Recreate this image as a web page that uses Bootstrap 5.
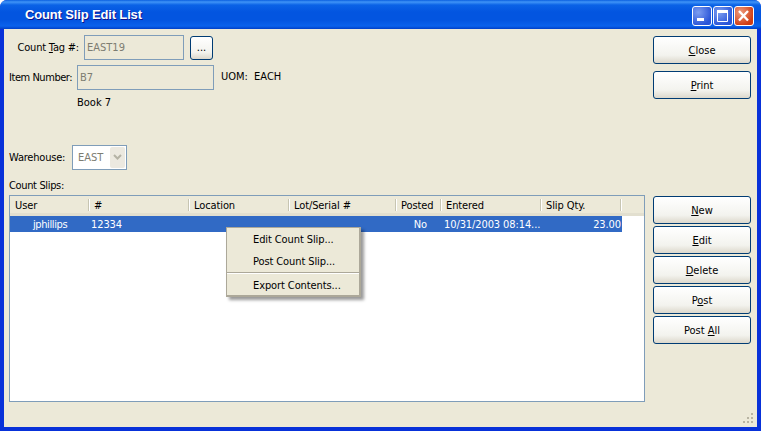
<!DOCTYPE html>
<html><head><meta charset="utf-8"><title>Count Slip Edit List</title>
<link href="https://cdn.jsdelivr.net/npm/bootstrap@5.3.0/dist/css/bootstrap.min.css" rel="stylesheet">
<style>
html,body{height:431px;overflow:hidden;background:#fff}
body{font:11px/13px "DejaVu Sans Condensed","Liberation Sans",Arial,sans-serif;color:#000;letter-spacing:-.1px}
u{text-decoration-thickness:1px;text-underline-offset:1px}
.win{width:761px;height:431px;background:#0831d9;border-radius:7px 7px 0 0;overflow:hidden}
.tbar{height:29px;padding:0 7px 0 25px;background:linear-gradient(#0a5fe0 0,#3f94f7 2px,#0a62e6 5px,#0355e0 12px,#0355e0 20px,#0a62ec 26px,#0040c8 29px)}
.ttl{font:700 13px/15px "Liberation Sans",Arial,sans-serif;color:#fff;text-shadow:1px 1px #0f1089;letter-spacing:-.15px}
.wbtn{width:20px;height:20px;border:1px solid #fff;border-radius:3px;background:radial-gradient(circle at 30% 30%,#7d9ef0,#2a55d8 75%)}
.wbtn svg{display:block}
.wbtn.cl{background:radial-gradient(circle at 30% 30%,#ee9c7e,#d03c12 75%)}
.ctl{gap:1px;margin-top:2px}
.wbody{height:398px;margin:0 4px;background:#ece9d8;position:relative;padding:6px 6px 0 5px}
.leftp{width:636px}
.rightp{width:98px;margin-left:8px;padding-top:1px}
.xpb{display:block;width:98px;height:28px;padding:0;border:1px solid #003c74;border-radius:3px;background:linear-gradient(#fff,#f3f3ee 70%,#dcd8cc);font-size:11px;color:#000;text-align:center}
.xpb.sm{width:23px;height:24px;line-height:14px;margin:1px 0 0 6px}
.gap7{margin-top:7px}.gap2{margin-top:2px}.btop{margin-top:97px}
.fld{height:25px;border:1px solid #7f9db9;background:#ece9d8;color:#7d7d72;padding-left:2px;line-height:23px;letter-spacing:0}
.r1{height:25px;margin-bottom:5px}
.lbl1{width:70px;text-align:right;margin-right:5px;line-height:25px;white-space:nowrap;letter-spacing:-.2px}
.w100{width:100px}.w137{width:137px}
.lbl2{width:63px;line-height:25px;margin-right:5px;white-space:nowrap;letter-spacing:-.45px}
.uom{margin-left:7px;line-height:23px;word-spacing:3px;letter-spacing:0}
.bk{margin:6px 0 0 68px;height:13px;letter-spacing:0}
.wh{margin-top:36px;height:25px}
.lblw{width:58px;line-height:25px;margin-right:5px;letter-spacing:-.2px}
.cmb{width:55px;height:25px;border:1px solid #7f9db9;background:#fff;color:#7d7d72;padding:1px 1px 1px 5px;line-height:21px;letter-spacing:0}
.arr{width:15px;height:21px;margin-left:auto;background:#ece9e0;border-radius:2px}
.arr svg{display:block;margin:7px auto 0}
.cs{margin-top:9px;height:14px;line-height:13px;letter-spacing:-.35px}
.lst{margin-top:2px;width:636px;height:207px;border:1px solid #7f9db9;background:#fff;position:relative}
.ghd,.grw{display:grid;grid-template-columns:79px 100px 100px 107px 45px 100px 80px 1fr}
.ghd{height:20px;background:#ece9d8;border-bottom:3px solid #e2dfcf;line-height:19px}
.ghd>div{padding-left:5px;position:relative;white-space:nowrap}
.ghd>div:not(:last-child)::after{content:"";position:absolute;right:0;top:3px;height:12px;width:1px;background:#c7c5b2;box-shadow:1px 0 #fff}
.grw{width:612px;height:16px;background:#316ac5;color:#fff;line-height:18px}
.grw>div{padding-left:2px;white-space:nowrap}
.grw .i1{padding-left:23px;letter-spacing:-.4px}.grw .ctr{padding:0 14px 0 16px;text-align:right}.grw .d{padding-left:3px}.grw .q{padding:0;text-align:right}
.cmenu{position:absolute;left:216px;top:31px;width:135px;height:70px;background:#ece9d8;border:1px solid #aca899;border-width:1px 2px 2px 1px;box-shadow:3px 3px 3px rgba(0,0,0,.4)}
.mi{height:22px;line-height:23px;padding-left:26px}
.msep{height:2px;background:#aca899;border-bottom:1px solid #fff}
.grip{position:absolute;right:3px;bottom:2px;display:block}
</style></head>
<body>
<div class="win">
 <div class="tbar d-flex align-items-center justify-content-between">
  <div class="ttl">Count Slip Edit List</div>
  <div class="ctl d-flex">
   <div class="wbtn"><svg width="18" height="18"><rect x="4" y="11" width="7" height="3" fill="#fff"/></svg></div>
   <div class="wbtn"><svg width="18" height="18"><path d="M3.500 4.500h10v10h-10z" fill="none" stroke="#fff"/><rect x="3" y="3" width="11" height="3" fill="#fff"/></svg></div>
   <div class="wbtn cl"><svg width="18" height="18"><path d="M4 4l9 9.500M13 4l-9 9.500" stroke="#fff" stroke-width="2.400"/></svg></div>
  </div>
 </div>
 <div class="wbody d-flex">
  <div class="leftp">
   <div class="r1 d-flex">
    <div class="lbl1">Count <u>T</u>ag #:</div>
    <div class="fld w100">EAST19</div>
    <button class="xpb sm" type="button">...</button>
   </div>
   <div class="r1 d-flex">
    <div class="lbl2">Item Number:</div>
    <div class="fld w137">B7</div>
    <div class="uom">UOM: EACH</div>
   </div>
   <div class="bk">Book 7</div>
   <div class="wh d-flex">
    <div class="lblw">Warehouse:</div>
    <div class="cmb d-flex">EAST<div class="arr"><svg width="9" height="6"><path d="M1 1l3.500 3.500L8 1" fill="none" stroke="#b5b3a6" stroke-width="2"/></svg></div></div>
   </div>
   <div class="cs">Count Slips:</div>
   <div class="lst">
    <div class="ghd"><div>User</div><div>#</div><div>Location</div><div>Lot/Serial #</div><div>Posted</div><div>Entered</div><div>Slip Qty.</div><div></div></div>
    <div class="grw"><div class="i1">jphillips</div><div>12334</div><div></div><div></div><div class="ctr">No</div><div class="d">10/31/2003 08:14...</div><div class="q">23.00</div></div>
    <div class="cmenu">
     <div class="mi">Edit Count Slip...</div>
     <div class="mi">Post Count Slip...</div>
     <div class="msep"></div>
     <div class="mi">Export Contents...</div>
    </div>
   </div>
  </div>
  <div class="rightp">
   <button class="xpb" type="button"><u>C</u>lose</button>
   <button class="xpb gap7" type="button"><u>P</u>rint</button>
   <button class="xpb btop" type="button"><u>N</u>ew</button>
   <button class="xpb gap2" type="button"><u>E</u>dit</button>
   <button class="xpb gap2" type="button"><u>D</u>elete</button>
   <button class="xpb gap2" type="button">P<u>o</u>st</button>
   <button class="xpb gap2" type="button">Post <u>A</u>ll</button>
  </div>
  <svg class="grip" width="12" height="12" fill="#b8b4a2"><rect x="9" y="0" width="2" height="2"/><rect x="5" y="4" width="2" height="2"/><rect x="9" y="4" width="2" height="2"/><rect x="1" y="8" width="2" height="2"/><rect x="5" y="8" width="2" height="2"/><rect x="9" y="8" width="2" height="2"/></svg>
 </div>
</div>
</body></html>
